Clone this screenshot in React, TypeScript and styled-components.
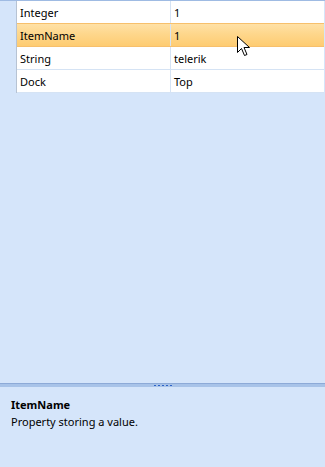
import styled, { createGlobalStyle } from 'styled-components';

const GlobalStyle = createGlobalStyle`
    html, body {
        margin: 0;
        padding: 0;
        background: #d5e5fa;
    }
    body {
        font-family: "Noto Sans", "DejaVu Sans", sans-serif;
        font-size: 11px;
        color: #000;
    }
    * {
        box-sizing: border-box;
    }
`;

const Shell = styled.div`
    width: 325px;
    height: 467px;
    display: flex;
    flex-direction: column;
    background: #d5e5fa;
    overflow: hidden;
`;

const GridArea = styled.div`
    flex: 1;
    border-top: 1px solid #9fbbe3;
    padding-left: 16px;
    padding-right: 1px;
`;

const Grid = styled.div`
    position: relative;
    border-left: 1px solid #b7c3d3;
    background: #ffffff;
`;

const Row = styled.div<{ $selected?: boolean }>`
    display: grid;
    grid-template-columns: 154px 1fr;
    height: 23px;
    border-bottom: 1px solid ${p => (p.$selected ? '#f7c06c' : '#d5e3f4')};
    border-top: ${p => (p.$selected ? '1px solid #f7c06c' : 'none')};
    margin-top: ${p => (p.$selected ? '-1px' : '0')};
    height: ${p => (p.$selected ? '24px' : '23px')};
    background: ${p => (p.$selected ? 'linear-gradient(#ffe1a6, #fed78c 45%, #fecc72)' : '#ffffff')};
`;

const Cell = styled.div<{ $divider?: boolean }>`
    display: flex;
    align-items: center;
    padding-left: 3px;
    border-right: ${p => (p.$divider ? '1px solid #d5e3f4' : 'none')};
    white-space: nowrap;
    overflow: hidden;
`;

const Cursor = styled.svg`
    position: absolute;
    left: 220px;
    top: 35px;
    pointer-events: none;
`;

const Splitter = styled.div`
    height: 4px;
    border-top: 1px solid #8daad7;
    background: #a8c3e8;
    display: flex;
    justify-content: center;
    align-items: center;
    gap: 2px;
`;

const Dot = styled.span`
    width: 2px;
    height: 1px;
    background: #2d63c8;
`;

const HelpPanel = styled.div`
    height: 80px;
    padding: 9px 11px 0;
    background: #d5e5fa;
`;

const HelpTitle = styled.div`
    font-weight: bold;
    line-height: 17px;
`;

const HelpText = styled.div`
    line-height: 17px;
`;

const rows = [
    { name: 'Integer', value: '1' },
    { name: 'ItemName', value: '1', selected: true },
    { name: 'String', value: 'telerik' },
    { name: 'Dock', value: 'Top' },
];

export default function App() {
    return (
        <Shell>
            <GlobalStyle />
            <GridArea>
                <Grid>
                    {rows.map(r => (
                        <Row key={r.name} $selected={r.selected}>
                            <Cell $divider>{r.name}</Cell>
                            <Cell>{r.value}</Cell>
                        </Row>
                    ))}
                    <Cursor width="14" height="21" viewBox="0 0 14 21">
                        <path
                            d="M0.5 0.5 L0.5 16.5 L4.5 12.5 L7.5 19.5 L10 18.5 L7 11.5 L12.5 11.5 Z"
                            fill="#ffffff"
                            stroke="#000000"
                            strokeWidth="1"
                            strokeLinejoin="miter"
                        />
                    </Cursor>
                </Grid>
            </GridArea>
            <Splitter>
                <Dot />
                <Dot />
                <Dot />
                <Dot />
                <Dot />
            </Splitter>
            <HelpPanel>
                <HelpTitle>ItemName</HelpTitle>
                <HelpText>Property storing a value.</HelpText>
            </HelpPanel>
        </Shell>
    );
}
